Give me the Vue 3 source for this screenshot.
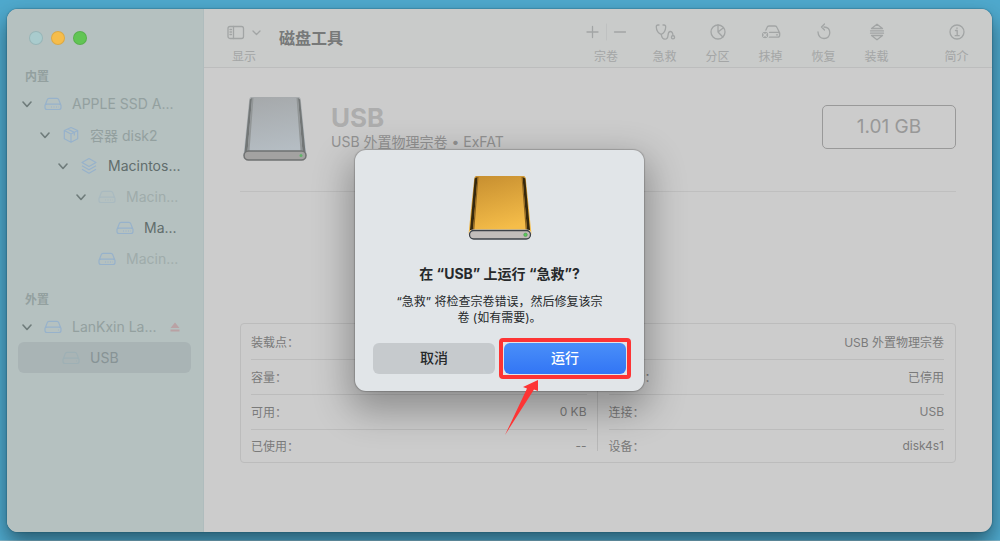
<template>
  <div class="desktop">
    <div class="window">
      <aside class="sidebar">
        <div class="lights">
          <button type="button" class="light close" aria-label="关闭"></button>
          <button type="button" class="light minimize" aria-label="最小化"></button>
          <button type="button" class="light zoom" aria-label="缩放"></button>
        </div>
        <section v-for="group in groups" :key="group.title" class="group">
          <h2 class="group-title">{{ group.title }}</h2>
          <ul class="tree">
            <li
              v-for="(row, idx) in group.rows"
              :key="idx"
              class="row"
              :class="[row.tone, { selected: row.selected }]"
              :style="{ paddingLeft: 4 + row.level * 18 + 'px' }"
            >
              <span class="chevron">
                <svg v-if="row.open" viewBox="0 0 10 10" width="10" height="10"><path d="M1 3l4 4.500 4-4.500" /></svg>
              </span>
              <svg class="row-icon" :class="row.iconTone" viewBox="0 0 20 20" width="20" height="20">
                <template v-if="row.icon === 'disk'">
                  <path d="M2 11.500L4.300 5.600Q4.800 4.400 6 4.400h8q1.200 0 1.700 1.200L18 11.500v2q0 2-2 2H4q-2 0-2-2zM2.200 11q.6-.8 1.800-.8h12q1.200 0 1.800.8" />
                  <path d="M8 13h1M10.500 13h1M13 13h1M15.500 13h.5" />
                </template>
                <template v-else-if="row.icon === 'external'">
                  <path d="M2 11.500L4.300 5.600Q4.800 4.400 6 4.400h8q1.200 0 1.700 1.200L18 11.500v2q0 2-2 2H4q-2 0-2-2zM2.200 11q.6-.8 1.800-.8h12q1.200 0 1.800.8M15 13h.8" />
                </template>
                <template v-else-if="row.icon === 'cube'">
                  <path d="M10 2.500l6.700 3v8.200L10 17.300l-6.700-3.600V5.500zM3.300 5.500L10 9l6.700-3.500M10 9v8.300M6.600 4l6.700 3.400v3" />
                </template>
                <template v-else>
                  <path d="M10 2.500l7 3.900-7 4-7-4zM3 9.800l7 4 7-4M3 13.200l7 4 7-4" />
                </template>
              </svg>
              <span class="row-label">{{ row.label }}</span>
              <button v-if="row.eject" type="button" class="eject" aria-label="推出">
                <svg viewBox="0 0 10 10" width="10" height="10"><path d="M5 .5L9.500 6h-9zM.5 7.500h9v2h-9z" /></svg>
              </button>
            </li>
          </ul>
        </section>
      </aside>

      <main class="main">
        <header class="toolbar">
          <button type="button" class="tool view">
            <span class="tool-icon">
              <svg viewBox="0 0 34 20" width="34" height="20">
                <rect x="1" y="4.500" width="15.500" height="12" rx="2" />
                <path d="M6.500 4.500v12M3 7.500h1.500M3 10h1.500M3 12.500h1.500M26 9l3.500 3.500L33 9" />
              </svg>
            </span>
            <span class="tool-label">显示</span>
          </button>
          <h1 class="app-title">磁盘工具</h1>
          <button v-for="tool in tools" :key="tool.id" type="button" class="tool" :class="tool.id">
            <span class="tool-icon">
              <svg v-if="tool.id === 'volume'" viewBox="0 0 42 20" width="42" height="20">
                <path d="M2 10h11M7.500 4.500v11M29.500 10h11" /><path class="hair" d="M21.500 2v16" />
              </svg>
              <svg v-else-if="tool.id === 'aid'" viewBox="0 0 22 20" width="22" height="20">
                <path d="M5 3H4Q2.200 3 2.300 5q.2 5.500 4.900 7.400Q11.500 10.500 11.700 5q0-2-1.700-2H9M7.200 12.400Q8 17.200 11 17.200q2.700 0 3-3.700t2-4q2.700-.2 3 4.300" />
                <circle cx="19" cy="15.200" r="1.600" />
              </svg>
              <svg v-else-if="tool.id === 'partition'" viewBox="0 0 20 20" width="20" height="20">
                <circle cx="10" cy="10" r="7" /><path d="M10 3v7l5.500-4.300M10 10l4.800 5" />
              </svg>
              <svg v-else-if="tool.id === 'erase'" viewBox="0 0 20 20" width="20" height="20">
                <path d="M4.500 9L6 5.500Q6.500 4 8 4h6q1.500 0 2 1.500L18.700 11v2q0 2.200-2.200 2.200H8M8.500 10.300H17q1.200 0 1.700.7M15.500 12.800h1" />
                <circle class="solid" cx="4" cy="13" r="3.800" /><path class="cross" d="M2.700 11.700l2.600 2.600M5.300 11.700l-2.600 2.600" />
              </svg>
              <svg v-else-if="tool.id === 'restore'" viewBox="0 0 20 20" width="20" height="20">
                <path d="M10 5Q15.800 5.200 15.800 10.700 15.500 16.300 10 16.500 4.300 16.200 4 10M10.500 2L7.500 5l3 3" />
              </svg>
              <svg v-else-if="tool.id === 'mount'" viewBox="0 0 20 20" width="20" height="20">
                <path d="M4.500 6.500L10 2.200l5.500 4.300zM4.500 13.500L10 17.800l5.500-4.300zM3.500 8.900h13M3.500 11.200h13" />
              </svg>
              <svg v-else viewBox="0 0 20 20" width="20" height="20">
                <circle cx="10" cy="10" r="7" /><path d="M8.500 8.500h1.700v5M8.200 13.700h4M10 6v.6" />
              </svg>
            </span>
            <span class="tool-label">{{ tool.label }}</span>
          </button>
        </header>

        <section class="hero">
          <svg class="drive" viewBox="0 0 66 68" width="66" height="68">
            <defs>
              <linearGradient id="silver" x1="0" y1="0" x2=".2" y2="1"><stop offset="0" stop-color="#a5a8aa" /><stop offset="1" stop-color="#b5bdc3" /></linearGradient>
            </defs>
            <path fill="url(#silver)" d="M9.500 2h47q2 0 2.300 3L64.500 60h-63L7.200 5Q7.500 2 9.500 2z" />
            <path fill="#727676" d="M7.900 4.500L10 3 5.500 57H2.500zM58.100 4.500L56 3l4.500 54h3z" />
            <path fill="#929697" d="M10 3h1.500L7.500 56h-2zM56 3h-1.500l4 53h2z" />
            <rect x="2" y="56" width="62" height="9" rx="4.500" fill="#a3a2a1" stroke="#6f7171" stroke-width="1.500" />
            <circle cx="59" cy="60.500" r="1.500" fill="#62b36a" />
          </svg>
          <div class="names">
            <h2 class="volume-name">USB</h2>
            <p class="volume-kind">USB 外置物理宗卷 • ExFAT</p>
          </div>
          <div class="capacity">1.01 GB</div>
        </section>

        <section class="details">
          <table v-for="(rows, side) in details" :key="side" class="facts">
            <tbody>
              <tr v-for="(item, idx) in rows" :key="idx">
                <th scope="row">{{ item[0] }}</th>
                <td>{{ item[1] }}</td>
              </tr>
            </tbody>
          </table>
        </section>
      </main>

      <div class="overlay">
        <div class="dialog" role="alertdialog" aria-labelledby="dlg-title" aria-describedby="dlg-text">
          <svg class="dialog-icon" viewBox="0 0 66 68" width="66" height="68">
            <defs>
              <linearGradient id="gold" x1="0" y1="0" x2=".3" y2="1"><stop offset="0" stop-color="#c58d2f" /><stop offset="1" stop-color="#f5bd49" /></linearGradient>
            </defs>
            <path fill="url(#gold)" d="M9.500 2h47q2 0 2.300 3L64.500 60h-63L7.200 5Q7.500 2 9.500 2z" />
            <path fill="#35280d" d="M7.700 4.500L10.500 3 6 56H3zM58.300 4.500L55.500 3 60 56h3z" />
            <path fill="#8d6420" d="M10.500 3h1L7.300 56H6zM55.500 3h-1l4.200 53H60z" />
            <rect x="1.500" y="55.500" width="63" height="10.500" rx="5" fill="#f2f2f2" />
            <rect x="2.500" y="56.500" width="61" height="8.500" rx="4.200" fill="#c3bdba" stroke="#3e4248" stroke-width="1.300" />
            <circle cx="58.500" cy="60.800" r="1.800" fill="#59c95a" stroke="#468b49" stroke-width=".5" />
          </svg>
          <h2 id="dlg-title" class="dialog-title">在 “USB” 上运行 “急救”?</h2>
          <p id="dlg-text" class="dialog-text">“急救” 将检查宗卷错误，然后修复该宗卷 (如有需要)。</p>
          <div class="actions">
            <button type="button" class="btn cancel">取消</button>
            <div class="run-wrap">
              <button type="button" class="btn run">运行</button>
              <svg class="arrow" viewBox="0 0 36 58" width="36" height="58"><path d="M1 56L23 9.500l-4-1.500L34 1v11l-4-1.500z" /></svg>
            </div>
          </div>
        </div>
      </div>
    </div>
  </div>
</template>

<script setup>
const groups = [
  {
    title: '内置',
    rows: [
      { label: 'APPLE SSD A...', icon: 'disk', level: 0, open: true },
      { label: '容器 disk2', icon: 'cube', level: 1, open: true },
      { label: 'Macintos...', icon: 'stack', level: 2, open: true, tone: 'strong' },
      { label: 'Macin...', icon: 'disk', level: 3, open: true, tone: 'weak', iconTone: 'faint' },
      { label: 'Ma...', icon: 'disk', level: 4, tone: 'strong' },
      { label: 'Macin...', icon: 'disk', level: 3, tone: 'weak' }
    ]
  },
  {
    title: '外置',
    rows: [
      { label: 'LanKxin La...', icon: 'external', level: 0, open: true, eject: true },
      { label: 'USB', icon: 'external', level: 1, selected: true, iconTone: 'muted' }
    ]
  }
];

const tools = [
  { id: 'volume', label: '宗卷' },
  { id: 'aid', label: '急救' },
  { id: 'partition', label: '分区' },
  { id: 'erase', label: '抹掉' },
  { id: 'restore', label: '恢复' },
  { id: 'mount', label: '装载' },
  { id: 'info', label: '简介' }
];

const details = [
  [['装载点：', ''], ['容量：', ''], ['可用：', '0 KB'], ['已使用：', '--']],
  [['', 'USB 外置物理宗卷'], ['所有者：', '已停用'], ['连接：', 'USB'], ['设备：', 'disk4s1']]
];
</script>

<style>
body { margin: 0; }
</style>

<style scoped>
* { box-sizing: border-box; }
h1, h2, p, ul { margin: 0; padding: 0; }
button { font: inherit; color: inherit; border: 0; padding: 0; background: none; }
svg { display: block; }

.desktop {
  display: flex; min-height: 100vh; padding: 9px 8px 8px 7px;
  background: #4fa9cd; border-bottom: 1px solid #7fb6cb;
  font-family: Inter, "Noto Sans CJK SC", sans-serif; font-size: 12px;
}
.window {
  position: relative; flex: 1; display: flex; border-radius: 11px; overflow: hidden;
  background: #ccc;
  box-shadow: 0 0 1px 1px rgba(20, 70, 90, .25), 0 10px 20px rgba(15, 40, 50, .6);
}

.sidebar { width: 197px; flex: none; padding: 22px 12px 0 11px; background: #b5c1c0; border-right: 1px solid #afbcbd; }
.lights { display: flex; gap: 8px; padding-left: 11px; margin-bottom: 20px; }
.light { width: 14px; height: 14px; border-radius: 50%; border: 1px solid rgba(0, 0, 0, .1); }
.light.close { background: #a9cbcd; }
.light.minimize { background: #f6bd4b; }
.light.zoom { background: #61c554; }
.group + .group { margin-top: 14px; }
.group-title { padding: 1px 0 0 7px; font-size: 12px; line-height: 22px; font-weight: 700; color: #93a09f; }
.tree { list-style: none; }
.row { display: flex; align-items: center; height: 31px; border-radius: 6px; font-size: 14px; color: #93a09f; white-space: nowrap; }
.row.strong { color: #616d6c; }
.row.weak { color: #9facab; }
.row.selected { background: #a9b4b5; color: #879395; }
.chevron { width: 10px; margin-right: 11px; }
.chevron path { fill: none; stroke: #6f7c7b; stroke-width: 1.6; stroke-linecap: round; stroke-linejoin: round; }
.row-icon { flex: none; margin-right: 9px; fill: none; stroke: #97b2cb; stroke-width: 1.2; stroke-linejoin: round; }
.row-icon.faint { stroke: #a9bac0; }
.row-icon.muted { stroke: #9eb0b5; }
.row-label { flex: 1; }
.eject { margin-right: 11px; }
.eject path { fill: #b9a2a4; }

.main { flex: 1; min-width: 0; }
.toolbar { display: flex; align-items: flex-start; height: 59px; padding: 13px 9px 0 23px; background: #c9cbca; border-bottom: 1px solid #bcbdbd; color: #a4a6a6; }
.tool { width: 53px; flex: none; display: flex; flex-direction: column; align-items: center; gap: 7px; }
.tool.view { width: 34px; }
.tool.volume { width: 64px; }
.tool.info { margin-left: 27px; }
.tool-icon svg { fill: none; stroke: #a2a5a5; stroke-width: 1.3; stroke-linecap: round; stroke-linejoin: round; }
.tool-icon .hair { stroke: #bfc1c1; stroke-width: 1; }
.tool-icon .solid { fill: #a2a5a5; stroke: #c9cbca; }
.tool-icon .cross { stroke: #c9cbca; }
.tool-label { line-height: 16px; }
.app-title { flex: 1; margin-left: 18px; font-size: 16px; line-height: 32px; font-weight: 700; color: #777979; }

.hero { display: flex; align-items: flex-start; margin: 0 36px; padding: 27px 0 28px 2px; border-bottom: 1px solid #bfbfbf; }
.names { flex: 1; margin: 9px 0 0 23px; }
.volume-name { font-size: 26px; line-height: 28px; font-weight: 700; color: #adadad; }
.volume-kind { font-size: 14px; line-height: 20px; color: #929292; }
.capacity { min-width: 134px; margin-top: 10px; border: 1px solid #999; border-radius: 5px; font-size: 19px; line-height: 42px; text-align: center; color: #989898; }

.details { display: flex; margin: 131px 36px 0; padding: 0 11px 0 10px; border: 1px solid #bcbcbc; border-radius: 4px; }
.details::before { content: ""; order: 1; width: 1px; margin: 12px 11px 11px 10px; background: #b8b8b8; }
.facts { flex: 1; border-collapse: collapse; color: #7a7a7a; }
.facts + .facts { order: 2; }
.facts th, .facts td { height: 35px; padding: 0; border-bottom: 1px solid #bcbcbc; font-weight: 400; text-align: left; }
.facts td { text-align: right; }
.facts tr:last-child > * { height: 33px; border-bottom: 0; }

.overlay { position: absolute; inset: 0; display: flex; justify-content: center; align-items: flex-start; padding-top: 141px; }
.dialog {
  width: 289px; padding: 24px 18px 17px; border-radius: 11px; background: #e1e5e8; text-align: center; color: #26292b;
  box-shadow: 0 0 1px 1px rgba(0, 0, 0, .18), 0 14px 36px 6px rgba(0, 0, 0, .3);
}
.dialog-icon { margin: 0 auto; }
.dialog-title { margin-top: 22px; font-size: 14px; line-height: 20px; font-weight: 700; }
.dialog-text { margin: 10px 20px 0; line-height: 16px; }
.actions { display: grid; grid-template-columns: 1fr 1fr; gap: 9px; margin-top: 17px; }
.btn { width: 100%; height: 31px; padding-bottom: 3px; border-radius: 6px; font-size: 14px; font-weight: 500; }
.btn.cancel { background: #c6cacd; }
.run-wrap { position: relative; }
.run-wrap::after { content: ""; position: absolute; inset: -5px; border: 4px solid #fd3434; border-radius: 4px; pointer-events: none; }
.btn.run { display: block; color: #fff; background: linear-gradient(#4a8ff8, #3275f5); }
.arrow { position: absolute; left: 0; top: 36px; fill: #fd3434; pointer-events: none; }
</style>
